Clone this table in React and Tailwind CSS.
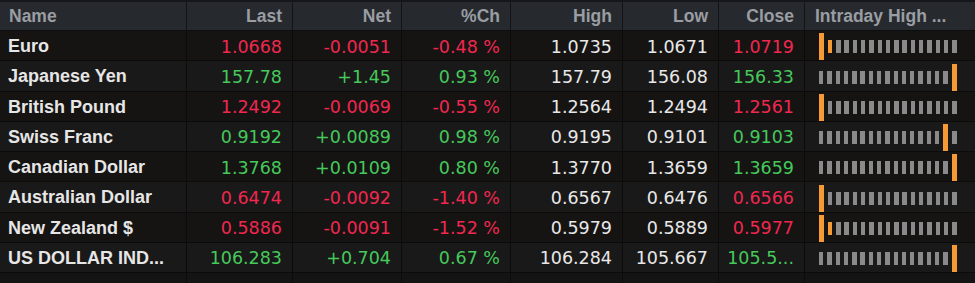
const rows = [
  { name: "Euro", last: "1.0668", net: "-0.0051", pct: "-0.48 %", high: "1.0735", low: "1.0671", close: "1.0719", up: false, closeUp: false, mark: 0, dot: 1 },
  { name: "Japanese Yen", last: "157.78", net: "+1.45", pct: "0.93 %", high: "157.79", low: "156.08", close: "156.33", up: true, closeUp: true, mark: 16 },
  { name: "British Pound", last: "1.2492", net: "-0.0069", pct: "-0.55 %", high: "1.2564", low: "1.2494", close: "1.2561", up: false, closeUp: false, mark: 0 },
  { name: "Swiss Franc", last: "0.9192", net: "+0.0089", pct: "0.98 %", high: "0.9195", low: "0.9101", close: "0.9103", up: true, closeUp: true, mark: 15 },
  { name: "Canadian Dollar", last: "1.3768", net: "+0.0109", pct: "0.80 %", high: "1.3770", low: "1.3659", close: "1.3659", up: true, closeUp: true, mark: 16 },
  { name: "Australian Dollar", last: "0.6474", net: "-0.0092", pct: "-1.40 %", high: "0.6567", low: "0.6476", close: "0.6566", up: false, closeUp: false, mark: 0 },
  { name: "New Zealand $", last: "0.5886", net: "-0.0091", pct: "-1.52 %", high: "0.5979", low: "0.5889", close: "0.5977", up: false, closeUp: false, mark: 0, dot: 1 },
  { name: "US DOLLAR IND...", last: "106.283", net: "+0.704", pct: "0.67 %", high: "106.284", low: "105.667", close: "105.5...", up: true, closeUp: true, mark: 16 },
];

const slots = Array.from({ length: 17 }, (_, i) => i);

function RangeBars({ mark, dot }) {
  return (
    <div className="flex h-full items-end gap-[3.9px] pl-[14px]">
      {slots.map((i) =>
        i === mark ? (
          <span key={i} className="h-[27px] w-[5px] bg-[#f59a34]" />
        ) : (
          <span
            key={i}
            className={`mb-[7px] h-[13px] w-[4.4px] ${i === dot ? "bg-[#f59a34]" : "bg-[#8a8a8a]"}`}
          />
        )
      )}
    </div>
  );
}

const num = "flex items-center justify-end pt-[2px] pr-[10px] border-r border-[#0b0b0b] font-['DejaVu_Sans',sans-serif] text-[17.5px]";

export default function App() {
  return (
    <div className="h-[283px] w-[975px] overflow-hidden bg-[#151414] font-['Liberation_Sans',sans-serif]">
      {/* header */}
      <div className="grid h-[31px] grid-cols-[187px_106px_109px_109px_112px_96px_86px_170px] border-t-2 border-b border-t-[#15171a] border-b-[#0c0d0f] bg-[#262a2f] text-[17.5px] font-bold text-[#9a9da2]">
        <div className="flex items-center border-r border-[#111316] pl-[9px]">Name</div>
        <div className="flex items-center justify-end border-r border-[#111316] pr-[10px]">Last</div>
        <div className="flex items-center justify-end border-r border-[#111316] pr-[10px]">Net</div>
        <div className="flex items-center justify-end border-r border-[#111316] pr-[10px]">%Ch</div>
        <div className="flex items-center justify-end border-r border-[#111316] pr-[10px]">High</div>
        <div className="flex items-center justify-end border-r border-[#111316] pr-[10px]">Low</div>
        <div className="flex items-center justify-end border-r border-[#111316] pr-[10px]">Close</div>
        <div className="flex items-center pl-[10px] whitespace-nowrap">Intraday High ...</div>
      </div>

      {rows.map((r, idx) => {
        const chg = r.up ? "text-[#45c95b]" : "text-[#f0274f]";
        const cls = r.closeUp ? "text-[#45c95b]" : "text-[#f0274f]";
        return (
          <div
            key={r.name}
            className={`grid h-[30.25px] grid-cols-[187px_106px_109px_109px_112px_96px_86px_170px] border-b border-[#0b0b0b] ${idx % 2 === 0 ? "bg-[#151413]" : "bg-[#1a1919]"}`}
          >
            <div className="flex items-center border-r border-[#0b0b0b] pt-[2px] pl-[8px] text-[18px] font-bold whitespace-nowrap text-[#e6e6e6]">
              {r.name}
            </div>
            <div className={`${num} ${chg}`}>{r.last}</div>
            <div className={`${num} ${chg}`}>{r.net}</div>
            <div className={`${num} ${chg}`}>{r.pct}</div>
            <div className={`${num} text-[#e8e8e8]`}>{r.high}</div>
            <div className={`${num} text-[#e8e8e8]`}>{r.low}</div>
            <div className={`${num} ${cls}`}>{r.close}</div>
            <RangeBars mark={r.mark} dot={r.dot} />
          </div>
        );
      })}

      {/* empty trailing row */}
      <div className="grid h-[30px] grid-cols-[187px_106px_109px_109px_112px_96px_86px_170px]">
        {slots.slice(0, 8).map((i) => (
          <div key={i} className={i < 7 ? "border-r border-[#0b0b0b]" : ""} />
        ))}
      </div>
    </div>
  );
}
